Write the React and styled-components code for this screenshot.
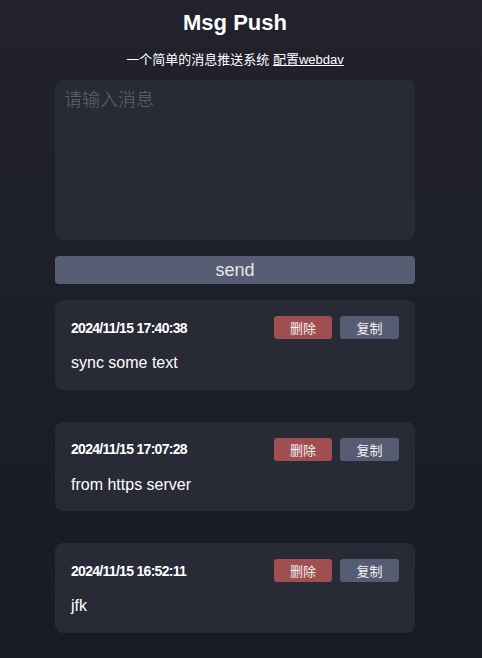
import React, { useState } from 'react';
import styled, { createGlobalStyle } from 'styled-components';

// 전체 페이지 기본 스타일
const GlobalStyle = createGlobalStyle`
  html, body {
    margin: 0;
    padding: 0;
  }
  body {
    font-family: "Liberation Sans", Arial, "Noto Sans CJK SC", sans-serif;
    color: #ffffff;
    background: #1b1d28;
  }
`;

let Page = styled.div`
  min-height: 100vh;
  box-sizing: border-box;
  padding: 10px 12px 24px 0;
  background: linear-gradient(180deg, #21222c 0%, #1c1e29 50%, #181b26 100%);
  display: flex;
  flex-direction: column;
  align-items: center;
`;

let Title = styled.h1`
  margin: 0;
  font-size: 22px;
  line-height: 25px;
  font-weight: 700;
`;

let Subtitle = styled.p`
  margin: 16px 0 11px;
  font-size: 13px;
  line-height: 18px;
  font-family: "Liberation Sans", "Noto Sans CJK SC", sans-serif;

  a {
    color: #ffffff;
    text-decoration: underline;
  }
`;

let Main = styled.div`
  width: 360px;
  display: flex;
  flex-direction: column;
  gap: 16px;
`;

let Input = styled.textarea`
  box-sizing: border-box;
  width: 100%;
  height: 160px;
  margin: 0;
  padding: 8px 9px;
  border: none;
  border-radius: 8px;
  background: #282a36;
  color: #e8e8e8;
  font-size: 18px;
  line-height: 1.2;
  font-family: "Noto Sans CJK SC", serif;
  resize: none;
  outline: none;
  display: block;

  &::placeholder {
    color: #62666f;
    font-weight: 300;
  }
`;

let SendButton = styled.button`
  height: 28px;
  border: none;
  border-radius: 4px;
  background: #575e73;
  color: #e6e6e6;
  font-size: 18px;
  font-family: "Liberation Sans", Arial, sans-serif;
  padding: 0;
  cursor: pointer;
`;

let List = styled.div`
  display: flex;
  flex-direction: column;
  gap: 32px;
`;

let Card = styled.div`
  background: #282a36;
  border-radius: 8px;
  padding: 16px;
`;

let CardHead = styled.div`
  display: flex;
  align-items: center;
  justify-content: space-between;
`;

let Time = styled.span`
  font-family: "Liberation Sans", Arial, sans-serif;
  font-weight: 700;
  font-size: 14px;
  letter-spacing: -0.7px;
`;

let Actions = styled.div`
  display: flex;
  gap: 8px;
`;

let SmallButton = styled.button`
  width: ${ props => props.너비 || 58 }px;
  height: 23px;
  padding: 0;
  border: none;
  border-radius: 3px;
  background: ${ props => props.색상 };
  color: #f0f0f0;
  font-size: 13px;
  font-family: "Noto Sans CJK SC", sans-serif;
  line-height: 23px;
  cursor: pointer;
`;

let Text = styled.div`
  margin-top: 14px;
  font-size: 16px;
  line-height: 20.5px;
`;

function App(){

  let [메시지, 메시지변경] = useState([
    { time: '2024/11/15 17:40:38', text: 'sync some text' },
    { time: '2024/11/15 17:07:28', text: 'from https server' },
    { time: '2024/11/15 16:52:11', text: 'jfk' },
  ]);

  return (
    <>
      <GlobalStyle />
      <Page>
        <Title>Msg Push</Title>
        <Subtitle>一个简单的消息推送系统 <a href="#">配置webdav</a></Subtitle>
        <Main>
          <Input placeholder="请输入消息" />
          <SendButton>send</SendButton>
          <List>
            {
              메시지.map((m, i)=>{
                return (
                  <Card key={i}>
                    <CardHead>
                      <Time>{m.time}</Time>
                      <Actions>
                        <SmallButton 색상="#a04f51" onClick={()=>{
                          let copy = [...메시지];
                          copy.splice(i, 1);
                          메시지변경(copy);
                        }}>删除</SmallButton>
                        <SmallButton 색상="#565d73" 너비={59}>复制</SmallButton>
                      </Actions>
                    </CardHead>
                    <Text>{m.text}</Text>
                  </Card>
                );
              })
            }
          </List>
        </Main>
      </Page>
    </>
  );
}

export default App;
